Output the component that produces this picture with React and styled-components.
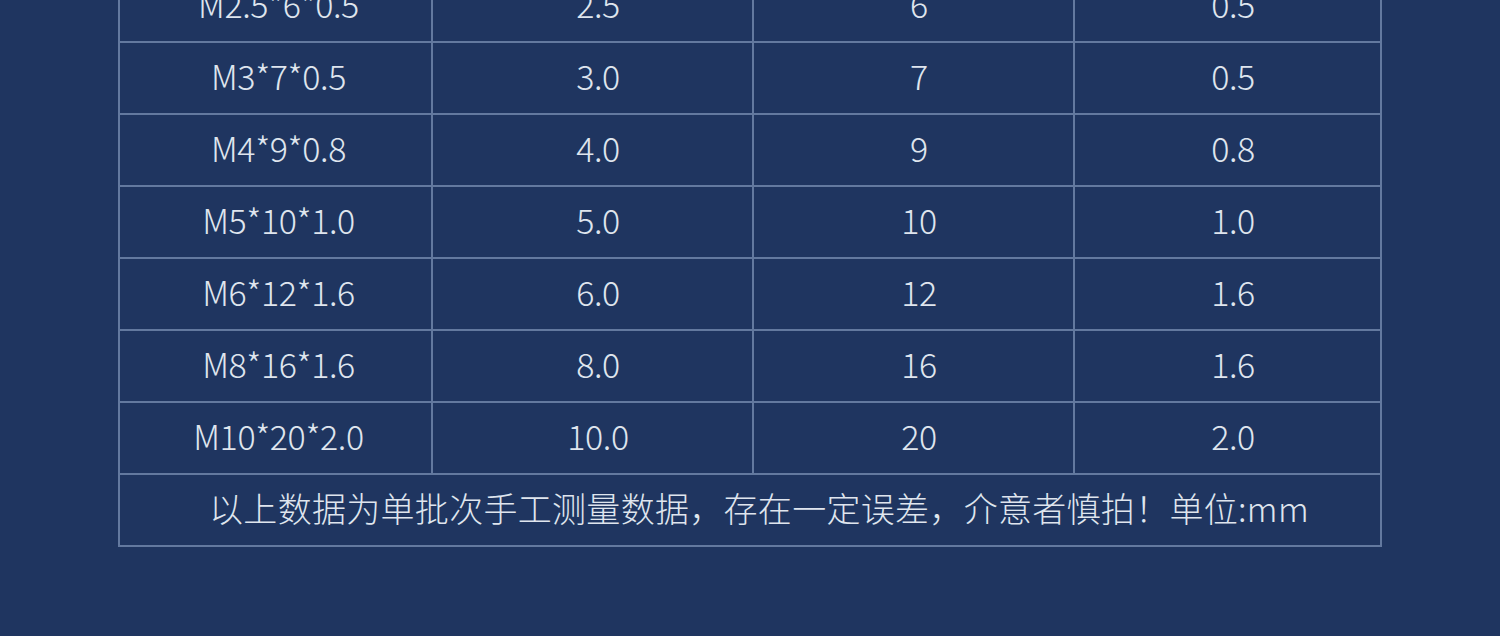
import React from "react";
import styled, { createGlobalStyle } from "styled-components";

const rows = [
  ["M2.5*6*0.5", "2.5", "6", "0.5"],
  ["M3*7*0.5", "3.0", "7", "0.5"],
  ["M4*9*0.8", "4.0", "9", "0.8"],
  ["M5*10*1.0", "5.0", "10", "1.0"],
  ["M6*12*1.6", "6.0", "12", "1.6"],
  ["M8*16*1.6", "8.0", "16", "1.6"],
  ["M10*20*2.0", "10.0", "20", "2.0"],
];

const widths = [313, 321, 321, 307];

export default function App() {
  return (
    <>
      <GlobalStyle />
      <Page>
        <SizeTable>
          <colgroup>
            {widths.map((w, i) => (
              <col key={i} style={{ width: w }} />
            ))}
          </colgroup>
          <tbody>
            {rows.map((row) => (
              <tr key={row[0]}>
                {row.map((cell, i) => (
                  <Cell key={i} $first={i === 0}>
                    {cell}
                  </Cell>
                ))}
              </tr>
            ))}
            <tr>
              <NoteCell colSpan={4}>
                以上数据为单批次手工测量数据，存在一定误差，介意者慎拍！单位:mm
              </NoteCell>
            </tr>
          </tbody>
        </SizeTable>
      </Page>
    </>
  );
}

// Styled Components
const GlobalStyle = createGlobalStyle`
  html, body {
    margin: 0;
    padding: 0;
    background: #1f3560;
  }
`;

const Page = styled.div`
  width: 1500px;
  height: 636px;
  overflow: hidden;
  background: #1f3560;
  display: flex;
  padding-left: 118px;
  box-sizing: border-box;
  font-family: "Noto Sans CJK SC", "Noto Sans", sans-serif;
  color: #dfe5ee;
`;

const SizeTable = styled.table`
  margin-top: -31px;
  border-collapse: collapse;
  table-layout: fixed;
  width: 1264px;
  height: fit-content;
`;

const Cell = styled.td`
  height: 72px;
  padding: 0 0 4px ${(p) => (p.$first ? "6px" : "11px")};
  box-sizing: border-box;
  border: 2px solid #63799f;
  text-align: center;
  vertical-align: middle;
  font-size: 34px;
  font-weight: 300;
  line-height: 1;
  letter-spacing: -0.4px;
`;

const NoteCell = styled(Cell)`
  padding-left: 18px;
  font-size: 34px;
  letter-spacing: 0.3px;
`;
